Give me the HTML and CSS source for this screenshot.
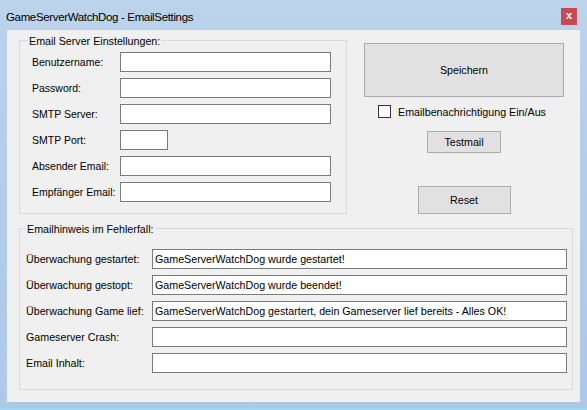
FILE: index.html
```html
<!DOCTYPE html>
<html>
<head>
<meta charset="utf-8">
<link rel="stylesheet" href="styles.css">
</head>
<body>
<div class="window">
  <div class="titlebar">
    <span class="title">GameServerWatchDog - EmailSettings</span>
    <span class="close">x</span>
  </div>
  <div class="client">
    <div class="top">
      <div class="group group1">
        <div class="legend">Email Server Einstellungen:</div>
        <div class="rows rows1">
          <span class="label">Benutzername:</span><span class="input"></span>
          <span class="label">Password:</span><span class="input"></span>
          <span class="label">SMTP Server:</span><span class="input"></span>
          <span class="label">SMTP Port:</span><span class="input port"></span>
          <span class="label">Absender Email:</span><span class="input"></span>
          <span class="label">Empfänger Email:</span><span class="input"></span>
        </div>
      </div>
      <div class="side">
        <div class="btn save">Speichern</div>
        <div class="check"><span class="box"></span><span class="label">Emailbenachrichtigung Ein/Aus</span></div>
        <div class="btn test">Testmail</div>
        <div class="btn reset">Reset</div>
      </div>
    </div>
    <div class="group group2">
      <div class="legend">Emailhinweis im Fehlerfall:</div>
      <div class="rows rows2">
        <span class="label">Überwachung gestartet:</span><span class="input">GameServerWatchDog wurde gestartet!</span>
        <span class="label">Überwachung gestopt:</span><span class="input">GameServerWatchDog wurde beendet!</span>
        <span class="label">Überwachung Game lief:</span><span class="input">GameServerWatchDog gestartert, dein Gameserver lief bereits - Alles OK!</span>
        <span class="label">Gameserver Crash:</span><span class="input"></span>
        <span class="label">Email Inhalt:</span><span class="input"></span>
      </div>
    </div>
  </div>
  <div class="bottomframe"></div>
</div>
</body>
</html>
```
FILE: styles.css
```css
html, body {
  margin: 0;
  padding: 0;
  width: 587px;
  height: 410px;
  overflow: hidden;
}
body {
  font-family: "Liberation Sans", Arial, sans-serif;
  font-size: 10.7px;
  color: #000;
}
.window {
  width: 587px;
  height: 410px;
  display: flex;
  flex-direction: column;
  background: linear-gradient(180deg, #bcd3ec 0%, #b4cde8 40%, #aec9e7 100%);
}
.titlebar {
  height: 30px;
  flex: none;
  display: flex;
  align-items: center;
  justify-content: space-between;
  padding: 0 10px 0 6px;
}
.title {
  font-size: 11.5px;
  letter-spacing: -0.35px;
  color: #000;
  margin-top: 3px;
}
.close {
  width: 16px;
  height: 17px;
  background: #c74a52;
  color: #fff;
  font-weight: bold;
  font-size: 11px;
  line-height: 15px;
  text-align: center;
  margin-top: 2px;
}
.client {
  flex: none;
  height: 372px;
  margin: 0 7px;
  background: #f0f0f0;
  box-sizing: border-box;
  padding: 10px 0 0 12px;
}
.bottomframe {
  flex: 1;
  border-bottom: 2px solid #9fd6f2;
}
.top {
  display: flex;
  align-items: flex-start;
}
.group {
  box-sizing: border-box;
  border: 1px solid #dadada;
}
.group1 {
  width: 328px;
  height: 174px;
  padding-left: 12px;
}
.legend {
  display: block;
  width: max-content;
  margin-top: -7px;
  height: 14px;
  line-height: 14px;
  background: #f0f0f0;
  padding: 0 1px;
}
.group1 .legend {
  margin-left: -4px;
}
.rows {
  display: grid;
  row-gap: 6px;
  align-items: center;
}
.rows1 {
  margin-top: 4px;
  grid-template-columns: 88px 211px;
}
.rows1 .label {
  font-size: 10.5px;
}
.input {
  box-sizing: border-box;
  height: 20px;
  background: #fff;
  border: 1px solid #7a7a7a;
  font-size: 10.7px;
  line-height: 18px;
  padding-left: 2px;
  white-space: nowrap;
  overflow: hidden;
}
.input.port {
  width: 48px;
}
.side {
  width: 200px;
  margin-left: 17px;
  padding-top: 3px;
  display: flex;
  flex-direction: column;
  align-items: center;
}
.btn {
  box-sizing: border-box;
  background: #e1e1e1;
  border: 1px solid #adadad;
  display: flex;
  align-items: center;
  justify-content: center;
}
.save {
  width: 200px;
  height: 54px;
}
.check {
  align-self: flex-start;
  margin-left: 14px;
  margin-top: 8px;
  height: 13px;
  display: flex;
  align-items: center;
}
.box {
  box-sizing: border-box;
  width: 13px;
  height: 13px;
  border: 1px solid #333;
  background: #fff;
  margin-right: 7px;
}
.test {
  margin-top: 13px;
  width: 74px;
  height: 22px;
}
.reset {
  margin-top: 33px;
  width: 93px;
  height: 28px;
}
.group2 {
  margin-top: 14px;
  width: 554px;
  height: 162px;
  padding-left: 6px;
}
.group2 .legend {
  margin-left: 0;
}
.rows2 {
  margin-top: 13px;
  grid-template-columns: 126px 415px;
}
```
